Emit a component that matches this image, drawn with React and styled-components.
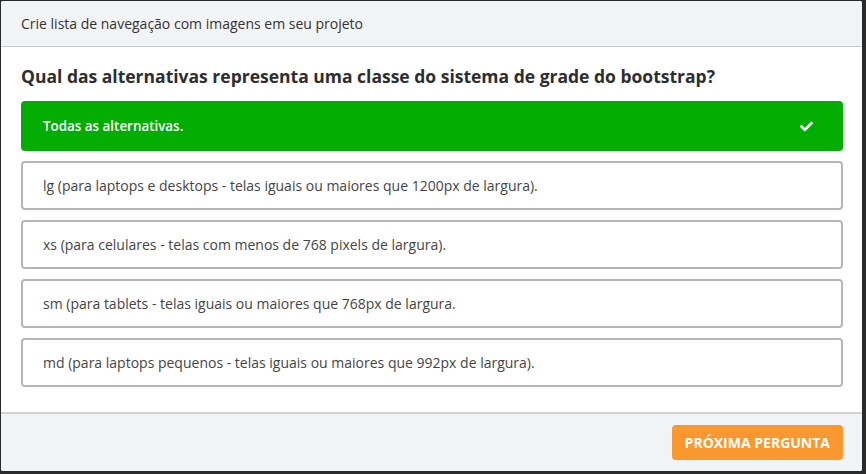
import React from 'react'
import styled, { createGlobalStyle } from 'styled-components'
import { FaCheck } from 'react-icons/fa'

const GlobalStyle = createGlobalStyle`
  html, body {
    margin: 0;
    padding: 0;
    background: #2a2a2a;
  }
  body {
    font-family: 'Open Sans', 'Noto Sans', sans-serif;
  }
`

const StyledBackdrop = styled.div`
  box-sizing: border-box;
  width: 866px;
  height: 474px;
  padding: 1px 4px 3px 1px;
`

const StyledModal = styled.div`
  height: 100%;
  display: flex;
  flex-direction: column;
  background-color: white;
  border-radius: 2px;
  overflow: hidden;
`

const StyledHeader = styled.div`
  height: 45px;
  display: flex;
  align-items: center;
  padding: 0 20px;
  background-color: #f2f3f5;
  border-bottom: 1px solid #c9ccd0;
  font-size: 14px;
  color: #333333;
`

const StyledBody = styled.div`
  flex: 1;
  padding: 17px 19px 0 20px;
`

const StyledQuestion = styled.h2`
  margin: 0 0 12px;
  font-size: 17.5px;
  font-weight: 700;
  color: #2e2e2e;
  line-height: 25px;
`

const StyledList = styled.div`
  display: flex;
  flex-direction: column;
  gap: 10px;
`

const StyledOption = styled.div`
  box-sizing: border-box;
  height: ${props => (props.correct ? '50px' : '49px')};
  display: flex;
  align-items: center;
  justify-content: space-between;
  padding: 0 30px 0 22px;
  border-radius: 4px;
  background-color: ${props => (props.correct ? '#00ad00' : 'white')};
  border: ${props => (props.correct ? 'none' : '2px solid #b3b7bc')};
  padding-left: ${props => (props.correct ? '22px' : '20px')};
  color: ${props => (props.correct ? 'white' : '#454545')};
  font-size: ${props => (props.correct ? '13.4px' : '14px')};
  font-weight: ${props => (props.correct ? 600 : 400)};
`

const StyledCheck = styled(FaCheck)`
  width: 13px;
  height: 13px;
  color: white;
`

const StyledFooter = styled.div`
  height: 57px;
  display: flex;
  align-items: center;
  justify-content: flex-end;
  padding: 0 19px;
  background-color: #f2f3f5;
  border-top: 2px solid #cfd1d4;
`

const StyledButton = styled.button`
  height: 35px;
  padding: 0 13px;
  border: none;
  border-radius: 4px;
  background-color: #fa982f;
  color: white;
  font-family: 'Open Sans', sans-serif;
  font-weight: 700;
  font-size: 14px;
  cursor: pointer;
`

const options = [
  'lg (para laptops e desktops - telas iguais ou maiores que 1200px de largura).',
  'xs (para celulares - telas com menos de 768 pixels de largura).',
  'sm (para tablets - telas iguais ou maiores que 768px de largura.',
  'md (para laptops pequenos - telas iguais ou maiores que 992px de largura).'
]

const App = () => (
  <StyledBackdrop>
    <GlobalStyle />
    <StyledModal>
      <StyledHeader>Crie lista de navegação com imagens em seu projeto</StyledHeader>
      <StyledBody>
        <StyledQuestion>
          Qual das alternativas representa uma classe do sistema de grade do bootstrap?
        </StyledQuestion>
        <StyledList>
          <StyledOption correct>
            Todas as alternativas.
            <StyledCheck />
          </StyledOption>
          {options.map(text => (
            <StyledOption key={text}>{text}</StyledOption>
          ))}
        </StyledList>
      </StyledBody>
      <StyledFooter>
        <StyledButton>PRÓXIMA PERGUNTA</StyledButton>
      </StyledFooter>
    </StyledModal>
  </StyledBackdrop>
)

export default App
